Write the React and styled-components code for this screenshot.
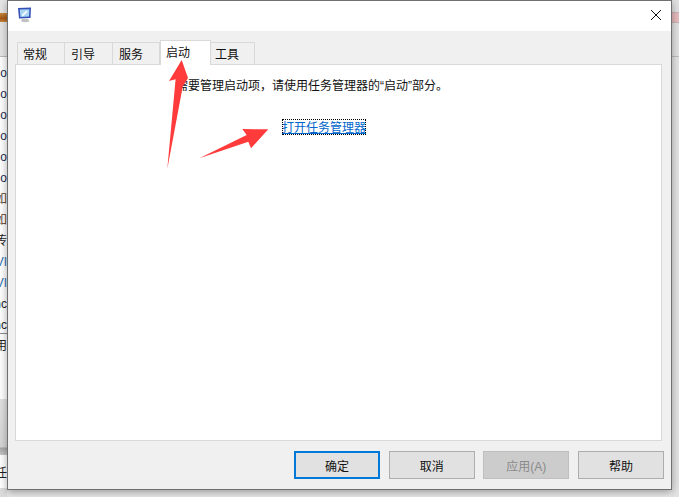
import React from 'react';
import styled, { createGlobalStyle } from 'styled-components';

const GlobalStyle = createGlobalStyle`
  html, body {
    margin: 0;
    padding: 0;
    background: #e6e6e6;
  }
  * {
    box-sizing: border-box;
  }
`;

const Desktop = styled.div`
  position: relative;
  width: 679px;
  height: 497px;
  overflow: hidden;
  display: flex;
  background: #e8e8e8;
  font-family: "Liberation Sans", "Noto Sans CJK SC", sans-serif;
`;

const BackStrip = styled.div`
  width: 7px;
  height: 497px;
  flex: none;
  display: flex;
  flex-direction: column;
  background: #fff;
  overflow: hidden;
`;

const BackTop = styled.div`
  height: 57px;
  flex: none;
  background: #e6e6e6;
  border-bottom: 1px solid #bdbdbd;
  padding-top: 13px;
`;

const OrangeBand = styled.div`
  height: 9px;
  background: linear-gradient(#c98a3a, #a8591a 60%, #c98a3a);
`;

const RowList = styled.div`
  height: 277px;
  flex: none;
  padding-top: 4px;
  border-bottom: 1px solid #8c8c8c;
`;

const BackRow = styled.div`
  height: 21px;
  font-size: 12px;
  line-height: 24px;
  color: ${p => p.$color || '#222'};
  white-space: nowrap;
  direction: rtl;
  overflow: hidden;
`;

const BackNote = styled(BackRow)`
  height: 65px;
  flex: none;
`;

const BackGrey = styled.div`
  height: 56px;
  flex: none;
  background: linear-gradient(#e2e2e2 0, #d6d6d6 85%, #a8a8a8 88%, #c8c8c8 100%);
`;

const BackBottom = styled(BackRow)`
  height: 33px;
  flex: none;
  line-height: 36px;
`;

const BackEdge = styled.div`
  flex: 1;
  background: #dcdcdc;
`;

const Dialog = styled.div`
  position: relative;
  z-index: 1;
  width: 665px;
  height: 490px;
  flex: none;
  display: flex;
  flex-direction: column;
  background: #f0f0f0;
  border: 1px solid #707070;
  box-shadow: 0 2px 8px rgba(0, 0, 0, 0.35);
`;

const TitleBar = styled.div`
  height: 30px;
  flex: none;
  display: flex;
  align-items: center;
  justify-content: space-between;
  padding: 0 10px 3px 9px;
  background: #fff;
`;

const Content = styled.div`
  flex: 1;
  display: flex;
  flex-direction: column;
  padding: 9px 7px 0 7px;
`;

const TabBar = styled.div`
  height: 25px;
  flex: none;
  display: flex;
  align-items: flex-end;
  padding-left: 2px;
  position: relative;
  z-index: 1;
  margin-bottom: -1px;
`;

const Tab = styled.div`
  width: ${p => p.$width}px;
  height: ${p => (p.$active ? 25 : 23)}px;
  display: flex;
  align-items: center;
  padding-left: ${p => p.$inset}px;
  padding-bottom: ${p => (p.$active ? 3 : 0)}px;
  font-size: 12px;
  color: #111;
  border: 1px solid #d9d9d9;
  border-left-width: ${p => (p.$first || p.$active ? 1 : 0)}px;
  border-bottom: ${p => (p.$active ? 'none' : '1px solid #d9d9d9')};
  background: ${p => (p.$active ? '#fff' : '#f0f0f0')};
`;

const Panel = styled.div`
  width: 647px;
  height: 377px;
  flex: none;
  display: flex;
  flex-direction: column;
  background: #fff;
  border: 1px solid #d9d9d9;
  padding: 13px 0 0 160px;
`;

const Hint = styled.div`
  font-size: 12px;
  line-height: 16px;
  color: #111;
  white-space: nowrap;
`;

const LinkRow = styled.div`
  margin: 25px 0 0 106px;
  display: flex;
`;

const TaskLink = styled.a`
  width: 84px;
  height: 16px;
  font-size: 12px;
  line-height: 18px;
  color: #0066cc;
  text-decoration: underline;
  outline: 1px dotted #000;
  outline-offset: -1px;
  white-space: nowrap;
`;

const Footer = styled.div`
  display: flex;
  justify-content: flex-end;
  gap: 8.67px;
  padding-top: 10px;
`;

const Button = styled.div`
  width: 86px;
  height: 28px;
  display: flex;
  align-items: center;
  justify-content: center;
  font-size: 12px;
  color: ${p => (p.$disabled ? '#8a8a8a' : '#111')};
  background: ${p => (p.$disabled ? '#cccccc' : '#e1e1e1')};
  border: ${p => (p.$primary ? '2px solid #0078d7' : p.$disabled ? '1px solid #bfbfbf' : '1px solid #adadad')};
`;

const RightStrip = styled.div`
  width: 7px;
  height: 497px;
  flex: none;
  display: flex;
  flex-direction: column;
  background: #e4e4e4;
`;

const RightTop = styled.div`
  height: 57px;
  flex: none;
  padding-top: 12px;
  background: #e2e2e2;
  border-bottom: 1px solid #bdbdbd;
`;

const PinkBand = styled.div`
  height: 11px;
  background: #e8bcbc;
  border-top: 1px solid #c9b4b4;
  border-bottom: 1px solid #c9b4b4;
`;

const ArrowLayer = styled.svg`
  position: absolute;
  z-index: 2;
  left: 0;
  top: 0;
  pointer-events: none;
`;

const AppIcon = () => (
  <svg width="16" height="16" viewBox="0 0 16 16">
    <path d="M1 1 L14 0.5 L13.5 11 L2 11.5 Z" fill="#3450b8" />
    <path d="M2.8 2.6 L12.4 2.2 L12 9.6 L3.4 10 Z" fill="#a9d6f5" />
    <path d="M5.4 8.6 L10 4" stroke="#fff" strokeWidth="1.5" />
    <path d="M5 12 h6 l1.5 2.6 q-4 1.4 -8.5 0 z" fill="#c2c2c2" />
  </svg>
);

const CloseIcon = () => (
  <svg width="10" height="10" viewBox="0 0 10 10">
    <path d="M0 0 L10 10 M10 0 L0 10" stroke="#111" strokeWidth="1" fill="none" />
  </svg>
);

const leftRows = [
  { text: 'o', color: '#1c2c50' },
  { text: 'o', color: '#1c2c50' },
  { text: 'o', color: '#1c2c50' },
  { text: 'o', color: '#1c2c50' },
  { text: 'o', color: '#1c2c50' },
  { text: 'o', color: '#1c2c50' },
  { text: '如', color: '#5a3a20' },
  { text: '如', color: '#5a3a20' },
  { text: '传', color: '#222' },
  { text: 'VI', color: '#2a6fb0' },
  { text: 'VI', color: '#2a6fb0' },
  { text: 'nc', color: '#222' },
  { text: 'nc', color: '#222' },
];

export default function App() {
  return (
    <Desktop>
      <GlobalStyle />
      <BackStrip>
        <BackTop>
          <OrangeBand />
        </BackTop>
        <RowList>
          {leftRows.map((row, i) => (
            <BackRow key={i} $color={row.color}>{row.text}</BackRow>
          ))}
        </RowList>
        <BackNote>用</BackNote>
        <BackGrey />
        <BackBottom>任</BackBottom>
        <BackEdge />
      </BackStrip>
      <Dialog>
        <TitleBar>
          <AppIcon />
          <CloseIcon />
        </TitleBar>
        <Content>
          <TabBar>
            <Tab $width={48} $inset={5} $first>常规</Tab>
            <Tab $width={48} $inset={6}>引导</Tab>
            <Tab $width={47} $inset={6}>服务</Tab>
            <Tab $width={51} $inset={5} $active>启动</Tab>
            <Tab $width={44} $inset={4}>工具</Tab>
          </TabBar>
          <Panel>
            <Hint>需要管理启动项，请使用任务管理器的“启动”部分。</Hint>
            <LinkRow>
              <TaskLink>打开任务管理器</TaskLink>
            </LinkRow>
          </Panel>
          <Footer>
            <Button $primary>确定</Button>
            <Button>取消</Button>
            <Button $disabled>应用(A)</Button>
            <Button>帮助</Button>
          </Footer>
        </Content>
      </Dialog>
      <RightStrip>
        <RightTop>
          <PinkBand />
        </RightTop>
      </RightStrip>
      <ArrowLayer width="679" height="497" viewBox="0 0 679 497">
        <path d="M181.7 60 L188 78 L182.7 86.7 L167.3 169 L175.6 79.3 L169 81 Z" fill="#ff3b3b" />
        <path d="M268.3 129.3 L242.3 129 L246.7 135 L199.3 158.3 L248.3 141.7 L251 148.3 Z" fill="#ff3b3b" />
      </ArrowLayer>
    </Desktop>
  );
}
